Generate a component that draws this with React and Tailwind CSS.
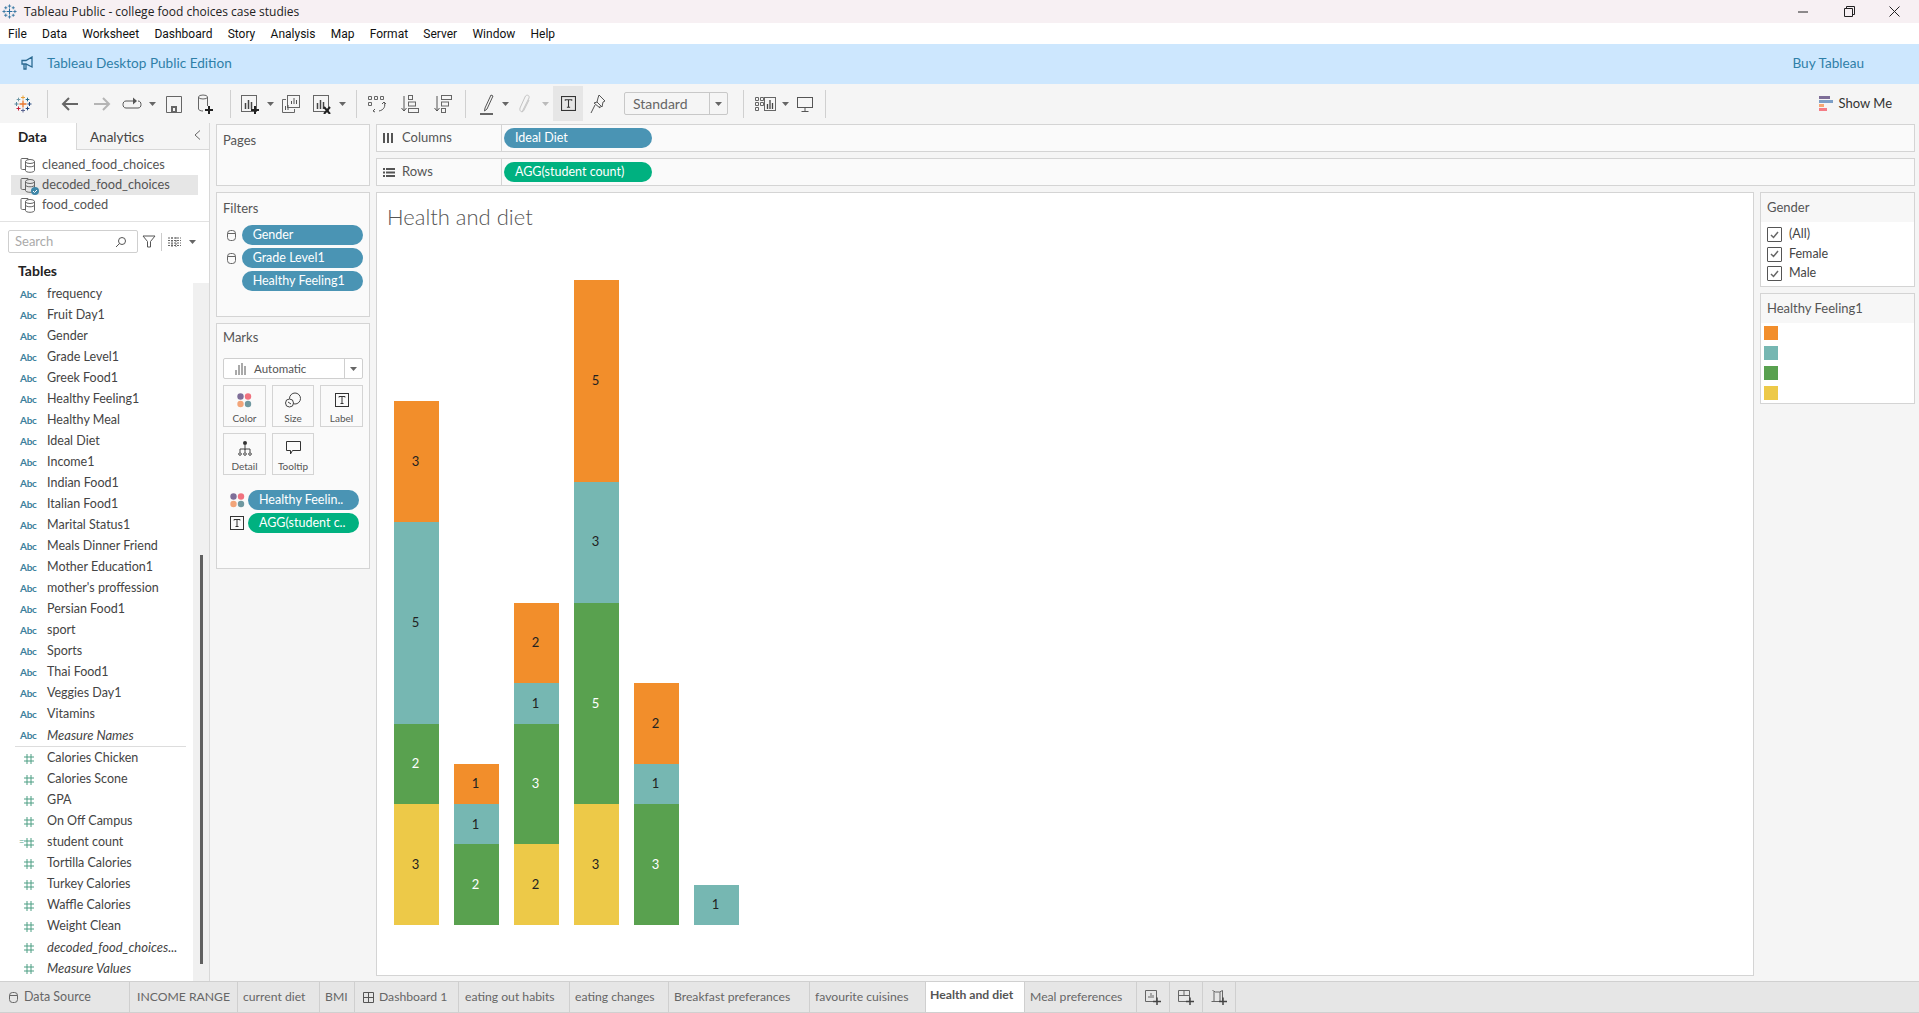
import React from "react";

const dimensions = [
  "frequency", "Fruit Day1", "Gender", "Grade Level1", "Greek Food1", "Healthy Feeling1", "Healthy Meal", "Ideal Diet",
  "Income1", "Indian Food1", "Italian Food1", "Marital Status1", "Meals Dinner Friend", "Mother Education1",
  "mother's proffession", "Persian Food1", "sport", "Sports", "Thai Food1", "Veggies Day1", "Vitamins",
];
const measures = [
  "Calories Chicken", "Calories Scone", "GPA", "On Off Campus", "student count", "Tortilla Calories", "Turkey Calories",
  "Waffle Calories", "Weight Clean",
];
const menu = ["File", "Data", "Worksheet", "Dashboard", "Story", "Analysis", "Map", "Format", "Server", "Window", "Help"];

const ORANGE = "#f28e2b";
const TEAL = "#76b7b2";
const GREEN = "#59a14f";
const YELLOW = "#edc948";
const UNIT = 40.3;

// stacks are top to bottom
const bars = [
  [[ORANGE, 3], [TEAL, 5], [GREEN, 2], [YELLOW, 3]],
  [[ORANGE, 1], [TEAL, 1], [GREEN, 2]],
  [[ORANGE, 2], [TEAL, 1], [GREEN, 3], [YELLOW, 2]],
  [[ORANGE, 5], [TEAL, 3], [GREEN, 5], [YELLOW, 3]],
  [[ORANGE, 2], [TEAL, 1], [GREEN, 3]],
  [[TEAL, 1]],
];

const tabs = [
  { label: "INCOME RANGE", w: "w-[108px] pl-[7px]" },
  { label: "current diet", w: "w-[82px] pl-[5px]" },
  { label: "BMI", w: "w-[35px] pl-[5px]" },
  { label: "Dashboard 1", w: "w-[104px] pl-[8px]", dash: true },
  { label: "eating out habits", w: "w-[111px] pl-[6px]" },
  { label: "eating changes", w: "w-[99px] pl-[5px]" },
  { label: "Breakfast preferances", w: "w-[141px] pl-[5px]" },
  { label: "favourite cuisines", w: "w-[116px] pl-[5px]" },
  { label: "Health and diet", w: "w-[99px] pl-[4px]", active: true },
  { label: "Meal preferences", w: "w-[112px] pl-[5px]" },
];

const Svg = ({ w = 20, h = 20, vb, children, className = "" }) => (
  <svg width={w} height={h} viewBox={vb || `0 0 ${w} ${h}`} fill="none" stroke="#555" strokeWidth="1" className={className}>
    {children}
  </svg>
);

const Caret = ({ color = "#666" }) => (
  <svg width="7" height="4" viewBox="0 0 7 4"><path d="M0 0h7L3.500 4z" fill={color} /></svg>
);

const Cross = ({ x, y, s, color, sw = 1 }) => (
  <path d={`M${x - s} ${y}H${x + s}M${x} ${y - s}V${y + s}`} stroke={color} strokeWidth={sw} />
);

function TableauLogo({ size = 18, mono }) {
  const c = (v) => mono || v;
  return (
    <svg width={size} height={size} viewBox="0 0 18 18" fill="none">
      <Cross x={9} y={9} s={3.500} color={c("#e8762d")} sw={1.300} />
      <Cross x={9} y={2.500} s={2} color={c("#e8a33d")} />
      <Cross x={9} y={15.500} s={2} color={c("#5b6591")} />
      <Cross x={2.500} y={9} s={2} color={c("#59879b")} />
      <Cross x={15.500} y={9} s={2} color={c("#1f447e")} />
      <Cross x={4.500} y={4.500} s={1.800} color={c("#7099a6")} />
      <Cross x={13.500} y={4.500} s={1.800} color={c("#1f6b8e")} />
      <Cross x={4.500} y={13.500} s={2} color={c("#c72037")} />
      <Cross x={13.500} y={13.500} s={1.800} color={c("#1f447e")} />
    </svg>
  );
}

const BarChartIcon = ({ children }) => (
  <Svg w={20} h={20}>
    <rect x="1.500" y="1.500" width="15" height="16" stroke="#666" />
    <path d="M5.500 15V9M8.500 15V6M11.500 15V8" stroke="#444" strokeWidth="1.500" />
    {children}
  </Svg>
);

const SavedIcon = () => (
  <Svg w={18} h={20}>
    <path d="M1.500 2.500h15v16h-15z" stroke="#666" />
    <rect x="6" y="12" width="6" height="6.500" fill="#666" stroke="none" />
    <rect x="8" y="14" width="2" height="3" fill="#f5f5f5" stroke="none" />
  </Svg>
);

const DbPlusIcon = () => (
  <Svg w={18} h={22}>
    <ellipse cx="7" cy="4" rx="4.500" ry="2" stroke="#666" />
    <path d="M2.500 4v12c0 1 2 2 4.500 2M11.500 4v9" stroke="#666" />
    <path d="M9 17h8M13 13v8" stroke="#222" strokeWidth="2" />
  </Svg>
);

const SortIcon = ({ desc }) => (
  <Svg w={18} h={20}>
    <path d="M3 2v15M0.500 14l2.500 3 2.500-3" stroke="#555" />
    <rect x="7.500" y="1.500" width={desc ? 10 : 4} height="4" stroke="#666" />
    <rect x="7.500" y="8" width="7" height="4" stroke="#666" />
    <rect x="7.500" y="14.500" width={desc ? 4 : 10} height="4" stroke="#666" />
  </Svg>
);

const DsIcon = ({ check }) => (
  <span className="relative block w-[16px] h-[16px]">
    <Svg w={16} h={16}>
      <path d="M8 3V1.500H2c-1 0-1 .5-1 1V11c0 1 .5 1.500 1.500 1.500H5" stroke="#666" />
      <ellipse cx="10" cy="4.500" rx="4.500" ry="2" stroke="#666" />
      <path d="M5.500 4.500v9c0 1 2 1.800 4.500 1.800s4.500-.8 4.500-1.800v-9M5.500 8c0 1 2 1.800 4.500 1.800s4.500-.8 4.500-1.800" stroke="#666" />
    </Svg>
    {check && (
      <svg width="8" height="8" viewBox="0 0 8 8" className="absolute right-[-3px] bottom-[-2px]">
        <circle cx="4" cy="4" r="4" fill="#3f87a8" />
        <path d="M2 4l1.500 1.500L6 3" stroke="#fff" fill="none" />
      </svg>
    )}
  </span>
);

const SmallDb = () => (
  <svg width="9" height="11" viewBox="0 0 9 11" fill="none" stroke="#666">
    <rect x="0.500" y="0.500" width="8" height="10" rx="3" />
    <path d="M0.500 3.500h8" />
  </svg>
);

const ColorDots = () => (
  <svg width="15" height="15" viewBox="0 0 15 15">
    <circle cx="3.500" cy="3.500" r="3.200" fill="#7e6e98" />
    <circle cx="11" cy="3.500" r="3.200" fill="#f0727f" />
    <circle cx="3.500" cy="11" r="3.200" fill="#f2a57a" />
    <circle cx="11" cy="11" r="3.200" fill="#6f98a0" />
  </svg>
);

const TBox = ({ size = 14 }) => (
  <svg width={size} height={size} viewBox="0 0 14 14" fill="none" stroke="#333">
    <rect x="0.500" y="0.500" width="13" height="13" />
    <path d="M4 4.500V3.500h6v1M7 3.500v7M5.500 10.500h3" />
  </svg>
);

const HashIcon = () => (
  <svg width="10" height="10" viewBox="0 0 10 10" fill="none" stroke="#4d9e83">
    <path d="M0 3h10M0 7h10M3 0v10M7 0v10" />
  </svg>
);

const Pill = ({ color = "bg-[#4a94b4]", width, children }) => (
  <div className={`${color} ${width} h-[20px] rounded-full flex items-center pl-[11px] text-white text-[12.500px] whitespace-nowrap`}>
    {children}
  </div>
);

const FieldRow = ({ name, kind, italic, calc }) => (
  <div className="h-[21px] flex items-center whitespace-nowrap">
    <span className="w-[47px] pl-[21px] flex items-center shrink-0">
      {kind === "abc" ? (
        <span className="text-[10px] font-bold text-[#3d7f9c] -ml-[1px] tracking-tight">Abc</span>
      ) : (
        <span className="relative ml-[3px]">
          {calc && <span className="absolute left-[-5px] top-[-3px] text-[9px] text-[#4d9e83]">=</span>}
          <HashIcon />
        </span>
      )}
    </span>
    <span className={`text-[#444] ${italic ? "italic text-[13px]" : "text-[12.500px]"}`}>{name}</span>
  </div>
);

const MarkButton = ({ label, children }) => (
  <div className="h-[42px] border border-[#d4d4d4] flex flex-col items-center pt-[4px] justify-between pb-[2px] bg-[#fafafa]">
    <span className="h-[20px] flex items-center">{children}</span>
    <span className="text-[10px] text-[#555] leading-none mb-[1px]">{label}</span>
  </div>
);

const Check = ({ label }) => (
  <div className="h-[19.500px] flex items-center pl-[6px] gap-[7px] text-[12.500px] text-[#444]">
    <span className="w-[15px] h-[15px] border border-[#555] rounded-[1px] flex items-center justify-center">
      <svg width="9" height="8" viewBox="0 0 9 8" fill="none" stroke="#666" strokeWidth="1.500"><path d="M1 4l2.500 2.500L8 1" /></svg>
    </span>
    {label}
  </div>
);

const Sep = ({ className = "" }) => <div className={`w-[1px] h-[28px] bg-[#d0d0d0] ${className}`} />;

const Slot = ({ className, children }) => (
  <div className={`flex items-center justify-center shrink-0 ${className}`}>{children}</div>
);

function Toolbar() {
  return (
    <div className="h-[39px] bg-[#f5f5f5] flex items-center shrink-0 relative">
      <Slot className="w-[30px] ml-[8px]"><TableauLogo /></Slot>
      <Sep className="ml-[9px]" />
      <Slot className="w-[32px] ml-[6px]">
        <Svg w={18} h={16}><path d="M17 8H2M8 2L2 8l6 6" stroke="#666" strokeWidth="2" /></Svg>
      </Slot>
      <Slot className="w-[32px]">
        <Svg w={18} h={16}><path d="M1 8h15M10 2l6 6-6 6" stroke="#b5b5b5" strokeWidth="2" /></Svg>
      </Slot>
      <Slot className="w-[28px]">
        <Svg w={20} h={16}>
          <path d="M12 5H4C2 5 1 6.500 1 8.500S2 12 4 12h12c2 0 3-1.500 3-3.500S18 5 16 5" stroke="#555" />
          <path d="M11 1.500L15 5l-4 3.500z" fill="#555" stroke="none" />
        </Svg>
      </Slot>
      <Slot className="w-[12px]"><Caret /></Slot>
      <Slot className="w-[32px]"><SavedIcon /></Slot>
      <Slot className="w-[30px]"><DbPlusIcon /></Slot>
      <Sep className="ml-[10px]" />
      <Slot className="w-[30px] ml-[4px]">
        <BarChartIcon><path d="M11 16h8M15 12v8" stroke="#222" strokeWidth="2" /></BarChartIcon>
      </Slot>
      <Slot className="w-[10px]"><Caret /></Slot>
      <Slot className="w-[32px]">
        <Svg w={20} h={20}>
          <rect x="6.500" y="1.500" width="12" height="12" stroke="#666" />
          <path d="M10.500 10V7M13 10V4M15.500 10V6" stroke="#555" />
          <path d="M5 5.500H1.500v13h12V15" stroke="#666" />
          <path d="M4.500 16v-4M7 16v-5" stroke="#555" />
        </Svg>
      </Slot>
      <Slot className="w-[30px]">
        <BarChartIcon><path d="M12 13l6 7M18 13l-6 7" stroke="#222" strokeWidth="2" /></BarChartIcon>
      </Slot>
      <Slot className="w-[10px]"><Caret /></Slot>
      <Sep className="ml-[9px]" />
      <Slot className="w-[32px] ml-[4px]">
        <Svg w={20} h={20}>
          <path d="M1.500 2.500h3v3h-3zM7.500 2.500h3v3h-3zM13.500 2.500h3v3h-3zM1.500 8.500h3v3h-3z" stroke="#666" />
          <path d="M17 8c2 4 0 8-5 9M8 18l-2-1 2-2M15 10l2-2 2 2" stroke="#555" />
        </Svg>
      </Slot>
      <Slot className="w-[34px]"><SortIcon /></Slot>
      <Slot className="w-[32px]"><SortIcon desc /></Slot>
      <Sep className="ml-[6px]" />
      <Slot className="w-[28px] ml-[7px]">
        <Svg w={14} h={24}>
          <path d="M5 16L11 3l2 1-6 13-2.500 2z" stroke="#555" />
          <rect x="0" y="21" width="13" height="2" fill="#666" stroke="none" />
        </Svg>
      </Slot>
      <Slot className="w-[8px]"><Caret /></Slot>
      <Slot className="w-[28px] ml-[2px]">
        <Svg w={14} h={22}>
          <path d="M4 19L11 5c1-3-3-4-4-1L2 15c-1 4 3 5 4 2l5-10" stroke="#c4c4c4" />
        </Svg>
      </Slot>
      <Slot className="w-[8px] ml-[2px]"><Caret color="#bbb" /></Slot>
      <Slot className="w-[30px] h-[35px] bg-[#e6e6e6] ml-[4px]"><TBox size={15} /></Slot>
      <Slot className="w-[30px]">
        <Svg w={16} h={20}>
          <path d="M9 1l6 6-2 1-1 5-5-5 1-4zM7 8l-3 1 6 5 0-2M5 11l-4 8" stroke="#555" />
        </Svg>
      </Slot>
      <div className="w-[104px] h-[23px] ml-[11px] border border-[#c8c8c8] rounded-[2px] flex items-center shrink-0">
        <span className="flex-1 pl-[8px] text-[14px] text-[#666]">Standard</span>
        <span className="w-[18px] h-full border-l border-[#c8c8c8] flex items-center justify-center"><Caret /></span>
      </div>
      <Sep className="ml-[15px]" />
      <Slot className="w-[30px] ml-[7px]">
        <Svg w={22} h={16}>
          <path d="M.5 1.500h3v3h-3zM5.500 1.500h3v3h-3zM.5 6.500h3v3h-3zM.5 11.500h3v3h-3zM5.500 6.500h3v3h-3z" stroke="#666" />
          <rect x="9.500" y="1.500" width="11" height="13" stroke="#666" />
          <path d="M12.500 13V8M15 13V4M17.500 13V7" stroke="#444" strokeWidth="1.300" />
        </Svg>
      </Slot>
      <Slot className="w-[8px]"><Caret /></Slot>
      <Slot className="w-[32px]">
        <Svg w={18} h={18}>
          <rect x="1.500" y="2.500" width="15" height="10" stroke="#555" />
          <path d="M9 12.500v4M5.500 16.500h7" stroke="#555" />
        </Svg>
      </Slot>
      <Sep className="ml-[4px]" />
      <div className="ml-auto mr-[27px] flex items-center gap-[6px]">
        <svg width="14" height="15" viewBox="0 0 14 15">
          <rect width="11" height="3" fill="#7e6e98" />
          <rect y="4" width="14" height="3" fill="#7c9fc7" />
          <rect y="8" width="5" height="3" fill="#f5a774" />
          <rect y="12" width="8" height="3" fill="#f47c85" />
        </svg>
        <span className="text-[13px] text-[#333]">Show Me</span>
      </div>
    </div>
  );
}

function DataPanel() {
  return (
    <div className="w-[210px] shrink-0 bg-white border-r border-[#d8d8d8] flex flex-col relative overflow-hidden">
      <div className="h-[27px] flex shrink-0 bg-[#f5f5f5]">
        <div className="w-[77px] bg-white border-r border-[#d8d8d8] flex items-center pl-[18px] pt-[2px] text-[13.500px] font-bold text-[#222]">Data</div>
        <div className="flex-1 border-b border-[#d8d8d8] flex items-center pl-[13px] pt-[2px] text-[13.500px] text-[#444] relative">
          Analytics
          <svg width="7" height="10" viewBox="0 0 7 10" fill="none" stroke="#666" className="absolute right-[8px] top-[7px]"><path d="M6 0.500L1 5l5 4.500" /></svg>
        </div>
      </div>
      <div className="h-[72px] shrink-0 border-b border-[#e2e2e2] pt-[5px] flex flex-col">
        {[["cleaned_food_choices"], ["decoded_food_choices", true], ["food_coded"]].map(([name, on]) => (
          <div key={name} className={`h-[20px] w-[187px] ml-[11px] flex items-center pl-[9px] gap-[6px] text-[12.800px] text-[#555] ${on ? "bg-[#e6e6e6]" : ""}`}>
            <DsIcon check={on} />
            {name}
          </div>
        ))}
      </div>
      <div className="flex items-center mt-[8px] pl-[8px] shrink-0">
        <div className="w-[130px] h-[23px] border border-[#cfcfcf] rounded-[2px] flex items-center justify-between pl-[6px] pr-[10px] text-[13px] text-[#aaa]">
          Search
          <svg width="12" height="12" viewBox="0 0 12 12" fill="none" stroke="#555"><circle cx="7" cy="5" r="3.500" /><path d="M4.500 7.500L1 11" /></svg>
        </div>
        <svg width="14" height="13" viewBox="0 0 14 13" fill="none" stroke="#555" className="ml-[4px]"><path d="M1 1h12L8.500 6.500V12h-3V6.500z" /></svg>
        <div className="w-[1px] h-[18px] bg-[#ccc] ml-[5px]" />
        <svg width="13" height="10" viewBox="0 0 13 10" className="ml-[6px]" fill="none" stroke="#666"><path d="M0 1h13M0 3.500h13M0 6h13M0 8.500h13M4 0v10M8 0v10" strokeDasharray="2 1" /></svg>
        <span className="ml-[8px]"><Caret /></span>
      </div>
      <div className="h-[18px] mt-[8px] pl-[18px] flex items-center text-[14px] font-bold text-[#222] shrink-0">Tables</div>
      <div className="mt-[5px] flex flex-col w-[193px]">
        {dimensions.map((d) => <FieldRow key={d} name={d} kind="abc" />)}
        <FieldRow name="Measure Names" kind="abc" italic />
        <div className="h-[1px] bg-[#ddd] ml-[15px] mr-[7px] mb-[1px]" />
        {measures.map((m) => <FieldRow key={m} name={m} calc={m === "student count"} />)}
        <FieldRow name="decoded_food_choices..." italic />
        <FieldRow name="Measure Values" italic />
      </div>
      {/* scroll track */}
      <div className="absolute right-0 top-[160px] bottom-0 w-[16px] bg-[#f0f0f0]">
        <div className="absolute left-[7px] top-[272px] bottom-[17px] w-[3px] bg-[#606060]" />
      </div>
    </div>
  );
}

const Card = ({ className, children }) => (
  <div className={`border border-[#d4d4d4] bg-[#fafafa] px-[6px] shrink-0 ${className}`}>{children}</div>
);

const CardTitle = ({ children, className = "pt-[6px]" }) => (
  <div className={`text-[13px] text-[#555] h-[26px] ${className}`}>{children}</div>
);

function SideCards() {
  return (
    <div className="w-[154px] flex flex-col gap-[6px] shrink-0 ml-[6px] mt-[1px]">
      <Card className="h-[62px]"><CardTitle>Pages</CardTitle></Card>
      <Card className="h-[125px]">
        <CardTitle>Filters</CardTitle>
        <div className="mt-[6px] flex flex-col gap-[3px]">
          {["Gender", "Grade Level1", "Healthy Feeling1"].map((f, i) => (
            <div key={f} className="flex items-center">
              <span className="w-[19px] pl-[4px] flex items-center">{i < 2 && <SmallDb />}</span>
              <Pill width="w-[124px]">{f}</Pill>
            </div>
          ))}
        </div>
      </Card>
      <Card className="h-[246px]">
        <CardTitle className="pt-[4px]">Marks</CardTitle>
        <div className="mt-[8px] h-[21px] w-[140px] border border-[#cfcfcf] rounded-[2px] flex items-center text-[11.500px] text-[#555] bg-white">
          <svg width="12" height="12" viewBox="0 0 12 12" className="ml-[11px] mr-[7px]" fill="none" stroke="#555"><path d="M1 12V7M4 12V2M7 12V0M10 12V3" /></svg>
          <span className="flex-1">Automatic</span>
          <span className="w-[18px] h-full border-l border-[#cfcfcf] flex items-center justify-center"><Caret /></span>
        </div>
        <div className="grid grid-cols-[43px_42px_43px] gap-x-[6px] gap-y-[6px] mt-[6px]">
          <MarkButton label="Color"><ColorDots /></MarkButton>
          <MarkButton label="Size">
            <Svg w={16} h={16}>
              <circle cx="10" cy="6.500" r="5.500" stroke="#444" />
              <circle cx="4.500" cy="11" r="4" stroke="#444" fill="#fafafa" />
              <path d="M3 10l3 2" stroke="#444" />
            </Svg>
          </MarkButton>
          <MarkButton label="Label"><TBox /></MarkButton>
          <MarkButton label="Detail">
            <Svg w={14} h={15}>
              <circle cx="7" cy="2" r="2" fill="#333" stroke="none" />
              <path d="M7 4v5M2 11V8h10v3M7 8v3" stroke="#444" />
              <circle cx="2" cy="13" r="1.300" stroke="#444" />
              <circle cx="7" cy="13" r="1.300" stroke="#444" />
              <circle cx="12" cy="13" r="1.300" stroke="#444" />
            </Svg>
          </MarkButton>
          <MarkButton label="Tooltip">
            <Svg w={15} h={14}>
              <path d="M.5.500h14v9H6.500l-2 3.500v-3.500h-4z" stroke="#333" />
            </Svg>
          </MarkButton>
        </div>
        <div className="mt-[15px] flex flex-col gap-[3px]">
          <div className="flex items-center">
            <span className="w-[25px] pl-[7px] flex"><ColorDots /></span>
            <Pill width="w-[111px]">Healthy Feelin..</Pill>
          </div>
          <div className="flex items-center">
            <span className="w-[25px] pl-[7px] flex"><TBox /></span>
            <Pill color="bg-[#00b180]" width="w-[111px]">AGG(student c..</Pill>
          </div>
        </div>
      </Card>
    </div>
  );
}

const Shelf = ({ label, icon, pill, color }) => (
  <div className="h-[28px] border border-[#d4d4d4] bg-[#fafafa] flex items-center shrink-0">
    <div className="w-[125px] h-full border-r border-[#d4d4d4] flex items-center shrink-0 text-[13px] text-[#555]">
      <span className="w-[25px] pl-[6px] flex">{icon}</span>
      {label}
    </div>
    <div className="pl-[2px]">
      <Pill color={color} width="w-[148px]">{pill}</Pill>
    </div>
  </div>
);

function Chart() {
  return (
    <div className="flex-1 border border-[#d4d4d4] bg-white flex flex-col pb-[50px] min-h-0">
      <div className="pl-[10px] pt-[10px] text-[22px] font-light text-[#555] leading-[28px]">Health and diet</div>
      <div className="flex-1 flex items-end gap-[15px] pl-[17px]">
        {bars.map((stack, i) => (
          <div key={i} className="w-[45px] flex flex-col">
            {stack.map(([color, n], j) => (
              <div
                key={j}
                className="flex items-center justify-center pr-[2px] text-[13px]"
                style={{ height: n * UNIT, backgroundColor: color, color: color === GREEN ? "#fff" : "#222" }}
              >
                {n}
              </div>
            ))}
          </div>
        ))}
      </div>
    </div>
  );
}

function RightCards() {
  return (
    <div className="w-[155px] shrink-0 flex flex-col gap-[6px] ml-[6px]">
      <div className="h-[95px] border border-[#d4d4d4] bg-white">
        <div className="h-[29px] bg-[#f7f7f7] flex items-center pl-[6px] text-[13px] text-[#555]">Gender</div>
        <div className="pt-[3px]">
          <Check label="(All)" />
          <Check label="Female" />
          <Check label="Male" />
        </div>
      </div>
      <div className="h-[111px] border border-[#d4d4d4] bg-white">
        <div className="h-[29px] bg-[#f7f7f7] flex items-center pl-[6px] text-[13px] text-[#555]">Healthy Feeling1</div>
        <div className="pl-[3px] pt-[3px] flex flex-col gap-[6px]">
          {[ORANGE, TEAL, GREEN, YELLOW].map((c) => (
            <div key={c} className={`w-[14px] h-[14px] ${c === ORANGE ? "bg-[#f28e2b]" : c === TEAL ? "bg-[#76b7b2]" : c === GREEN ? "bg-[#59a14f]" : "bg-[#edc948]"}`} />
          ))}
        </div>
      </div>
    </div>
  );
}

function TabBar() {
  return (
    <div className="h-[32px] bg-[#e6e6e6] border-t border-b border-[#d0d0d0] flex shrink-0 text-[12.200px] text-[#666] whitespace-nowrap">
      <div className="w-[130px] border-r border-[#cfcfcf] flex items-center pl-[9px] gap-[6px] text-[12.500px]"><SmallDb />Data Source</div>
      {tabs.map((t) => (
        <div
          key={t.label}
          className={`${t.w} border-r border-[#cfcfcf] flex items-center gap-[5px] ${t.active ? "bg-white font-bold text-[#555] pb-[3px]" : ""}`}
        >
          {t.dash && (
            <svg width="11" height="11" viewBox="0 0 11 11" fill="none" stroke="#555"><path d="M.5.500h10v10H.5zM.5 5.500h10M5.500.500v10" /></svg>
          )}
          {t.label}
        </div>
      ))}
      {["sheet", "dash", "story"].map((k) => (
        <div key={k} className="w-[33px] border-r border-[#cfcfcf] flex items-center justify-center">
          <Svg w={16} h={16}>
            {k === "sheet" && <path d="M.5 1.500h11v11H.5zM4 9V7M6 9V4M8 9V6" stroke="#666" />}
            {k === "dash" && <path d="M.5 1.500h11v11H.5zM.5 6.500h11M6 1.500v5" stroke="#666" />}
            {k === "story" && <path d="M1.500 1.500l3 1.500h4l3-1.500v11H.5M3 3v9M9 3v9" stroke="#666" />}
            <path d="M8 12.500h8M12 8.500v7.500" stroke="#444" strokeWidth="1.500" />
          </Svg>
        </div>
      ))}
    </div>
  );
}

export default function App() {
  return (
    <div className="w-[1919px] h-[1013px] flex flex-col overflow-hidden bg-[#f5f5f5] font-['Lato',sans-serif]">
      {/* window title */}
      <div className="h-[23px] bg-[#f7f0f3] flex items-center shrink-0 font-['Open_Sans',sans-serif] text-[12px] text-[#222]">
        <span className="ml-[2px] mr-[7px]"><TableauLogo size={15} mono="#2a6f9e" /></span>
        Tableau Public - college food choices case studies
        <div className="ml-auto flex items-center">
          <svg width="10" height="2" viewBox="0 0 10 2" className="mr-[36px]"><path d="M0 1h10" stroke="#222" /></svg>
          <svg width="11" height="11" viewBox="0 0 11 11" fill="none" stroke="#222" className="mr-[34px]"><path d="M.5 2.500h8v8h-8zM2.500 2.500v-2h8v8h-2" /></svg>
          <svg width="11" height="11" viewBox="0 0 11 11" stroke="#222" className="mr-[19px]"><path d="M.5.500l10 10M10.500.500l-10 10" /></svg>
        </div>
      </div>
      {/* menu */}
      <div className="h-[21px] bg-white flex items-center gap-[15.250px] pl-[8px] shrink-0 font-['Roboto',sans-serif] text-[12px] text-[#111]">
        {menu.map((m) => <span key={m}>{m}</span>)}
      </div>
      {/* banner */}
      <div className="h-[40px] bg-[#cde7fe] flex items-center shrink-0 text-[13.600px] text-[#2f7fa8] pb-[2px]">
        <svg width="14" height="14" viewBox="0 0 14 14" fill="none" stroke="#2b6a92" className="ml-[21px] mr-[12px]" strokeWidth="1.300"><path d="M1 4.500h4L11 1v10L5 8H1zM3 8v5h2V8" /></svg>
        Tableau Desktop Public Edition
        <span className="ml-auto mr-[55px]">Buy Tableau</span>
      </div>
      <Toolbar />
      {/* workspace */}
      <div className="flex-1 flex min-h-0">
        <DataPanel />
        <SideCards />
        <div className="flex-1 flex flex-col gap-[6px] ml-[6px] mr-[4px] pt-[1px] pb-[5px] min-w-0">
          <Shelf
            label="Columns"
            pill="Ideal Diet"
            icon={<svg width="11" height="10" viewBox="0 0 11 10" fill="#555"><rect width="2" height="10" /><rect x="4" width="2" height="10" /><rect x="8" width="2" height="10" /></svg>}
          />
          <Shelf
            label="Rows"
            pill="AGG(student count)"
            color="bg-[#00b180]"
            icon={<svg width="12" height="9" viewBox="0 0 12 9" fill="#555"><rect width="2" height="2" /><rect x="3" width="9" height="2" /><rect y="3.500" width="2" height="2" /><rect x="3" y="3.500" width="9" height="2" /><rect y="7" width="2" height="2" /><rect x="3" y="7" width="9" height="2" /></svg>}
          />
          <div className="flex-1 flex min-h-0">
            <Chart />
            <RightCards />
          </div>
        </div>
      </div>
      <TabBar />
    </div>
  );
}
